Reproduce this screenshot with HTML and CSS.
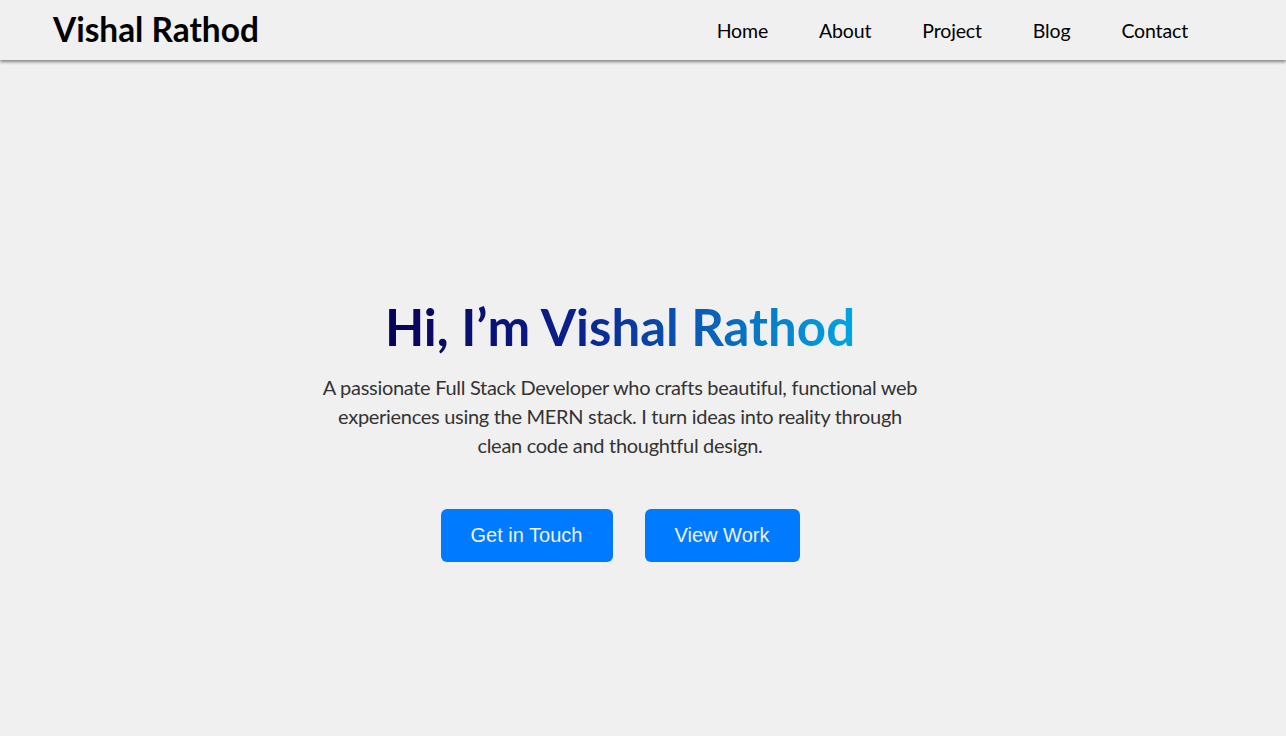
FILE: index.html
```html
<!DOCTYPE html>
<html lang="en">
<head>
<meta charset="utf-8">
<title>Vishal Rathod</title>
<link rel="stylesheet" href="styles.css">
</head>
<body>
<header class="header">
  <div class="logo">Vishal Rathod</div>
  <nav class="nav">
    <a href="#">Home</a>
    <a href="#">About</a>
    <a href="#">Project</a>
    <a href="#">Blog</a>
    <a href="#">Contact</a>
  </nav>
</header>
<main class="hero">
  <div class="hero-inner">
    <h1 class="title">Hi, I’m Vishal Rathod</h1>
    <p class="intro">A passionate Full Stack Developer who crafts beautiful, functional web experiences using the MERN stack. I turn ideas into reality through clean code and thoughtful design.</p>
    <div class="actions">
      <a class="btn btn-touch" href="#">Get in Touch</a>
      <a class="btn btn-work" href="#">View Work</a>
    </div>
  </div>
</main>
</body>
</html>
```
FILE: styles.css
```css
* { box-sizing: border-box; }
html, body { margin: 0; padding: 0; }
body {
  background: #f0f0f0;
  font-family: "Lato", "Open Sans", sans-serif;
  color: #000;
}
.header {
  height: 60px;
  display: flex;
  align-items: center;
  justify-content: space-between;
  padding: 0 98px 0 53px;
  background: #f0f0f0;
  box-shadow: 0 2px 3px rgba(0,0,0,0.45);
  position: relative;
  z-index: 1;
}
.logo {
  font-size: 33.4px;
  font-weight: 700;
  margin-top: -2px;
}
.nav { display: flex; gap: 51px; }
.nav a {
  color: #000;
  text-decoration: none;
  font-size: 19.5px;
  letter-spacing: -0.15px;
}
.hero {
  min-height: 100vh;
  display: flex;
  align-items: center;
  justify-content: center;
  padding: 4px 46px 0 0;
}
.hero-inner {
  display: flex;
  flex-direction: column;
  align-items: center;
  text-align: center;
  width: 600px;
}
.title {
  margin: 0 0 17px;
  font-size: 51px;
  font-weight: 700;
  line-height: 58px;
  background: linear-gradient(90deg, #070357 0%, #0a1f8f 40%, #0a63b8 70%, #01a6e2 100%);
  -webkit-background-clip: text;
  background-clip: text;
  color: transparent;
  white-space: nowrap;
}
.intro {
  margin: 0;
  font-size: 20px;
  line-height: 29px;
  letter-spacing: -0.3px;
  color: #333;
}
.actions {
  display: flex;
  gap: 32px;
  margin-top: 49px;
}
.btn {
  display: flex;
  align-items: center;
  justify-content: center;
  height: 53px;
  border-radius: 6px;
  background: #007bff;
  color: #f0f0f0;
  text-decoration: none;
  font-family: "Liberation Sans", Arial, sans-serif;
  font-size: 20px;
}
.btn-touch { width: 172px; }
.btn-work { width: 155px; }
```
